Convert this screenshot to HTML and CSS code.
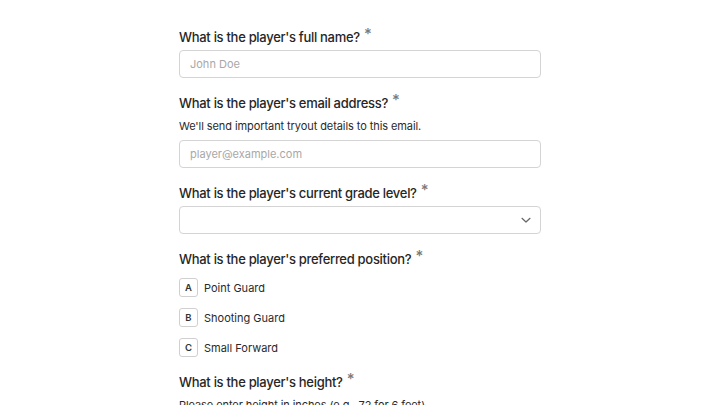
FILE: index.html
```html
<!DOCTYPE html>
<html>
<head>
<meta charset="utf-8">
<link rel="stylesheet" href="styles.css">
</head>
<body>
<main class="form">
  <section class="q">
    <label class="label">What is the player's full name? <span class="req">*</span></label>
    <input class="field" type="text" placeholder="John Doe">
  </section>
  <section class="q">
    <label class="label">What is the player's email address? <span class="req">*</span></label>
    <p class="desc">We'll send important tryout details to this email.</p>
    <input class="field" type="text" placeholder="player@example.com">
  </section>
  <section class="q">
    <label class="label">What is the player's current grade level? <span class="req">*</span></label>
    <div class="field select">
      <svg class="chev" width="12" height="12" viewBox="0 0 12 12"><path d="M2 4.3 L6 8 L10 4.3" fill="none" stroke="#666" stroke-width="1.2" stroke-linecap="round" stroke-linejoin="round"/></svg>
    </div>
  </section>
  <section class="q">
    <label class="label">What is the player's preferred position? <span class="req">*</span></label>
    <div class="options">
      <div class="opt"><span class="key">A</span><span>Point Guard</span></div>
      <div class="opt"><span class="key">B</span><span>Shooting Guard</span></div>
      <div class="opt"><span class="key">C</span><span>Small Forward</span></div>
    </div>
  </section>
  <section class="q">
    <label class="label">What is the player's height? <span class="req">*</span></label>
    <p class="desc">Please enter height in inches (e.g., 72 for 6 feet)</p>
  </section>
</main>
</body>
</html>
```
FILE: styles.css
```css
html, body { margin: 0; padding: 0; background: #fff; }
body { font-family: Inter, "Noto Sans", sans-serif; color: #1f1f1f; }
.form { width: 362px; margin: 0 auto; padding-top: 27px; display: flex; flex-direction: column; gap: 15px; }
.q { display: flex; flex-direction: column; }
.label { font-size: 13px; font-weight: 500; line-height: 20px; color: #262626; margin-bottom: 3px; letter-spacing: -0.3px; }
.req { color: #7a7a7a; font-size: 15px; position: relative; top: -3px; font-weight: 500; margin-left: 1px; letter-spacing: 0; }
.desc { margin: 1px 0 4px; font-size: 11px; line-height: 19px; color: #2a2a2a; letter-spacing: -0.08px; }
.field { box-sizing: border-box; height: 28px; width: 100%; border: 1px solid #d4d4d4; border-radius: 4px; padding: 0 10px; font-family: Inter, sans-serif; font-size: 11px; color: #222; background: #fff; outline: none; margin: 0; }
.field::placeholder { color: #a8a8a8; }
.select { display: flex; align-items: center; justify-content: flex-end; padding-right: 8px; }
.options { display: flex; flex-direction: column; gap: 11px; margin-top: 6px; }
.opt { display: flex; align-items: center; gap: 6px; font-size: 11px; color: #2a2a2a; height: 19px; }
.key { box-sizing: border-box; width: 19px; height: 19px; border: 1px solid #d0d0d0; border-radius: 3px; display: flex; align-items: center; justify-content: center; font-size: 9.5px; font-weight: 600; color: #333; }
```
